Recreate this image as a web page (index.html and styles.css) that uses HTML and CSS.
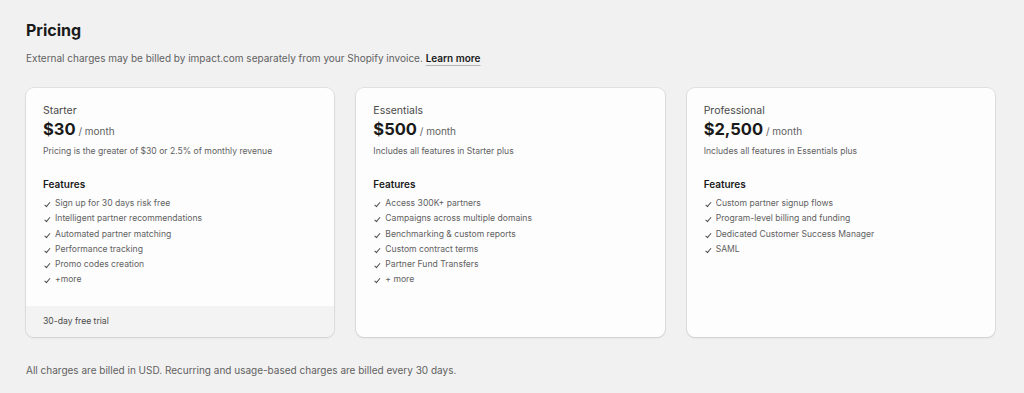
FILE: index.html
```html
<!DOCTYPE html>
<html lang="en">
<head>
    <meta charset="UTF-8">
    <meta name="viewport" content="width=device-width, initial-scale=1.0">
    <title>Pricing</title>
    <link rel="stylesheet" href="styles.css">
</head>
<body>
    <main class="pr-main">
        <h1 class="pr-title">Pricing</h1>
        <p class="pr-note">External charges may be billed by impact.com separately from your Shopify invoice. <a href="#" class="pr-link">Learn more</a></p>

        <div class="pr-plans">
            <div class="pr-card">
                <div class="pr-card-body">
                    <div class="pr-plan-name">Starter</div>
                    <div class="pr-price"><span class="pr-amount">$30</span> / month</div>
                    <div class="pr-desc">Pricing is the greater of $30 or 2.5% of monthly revenue</div>
                    <h3 class="pr-features-title">Features</h3>
                    <ul class="pr-features">
                        <li>Sign up for 30 days risk free</li>
                        <li>Intelligent partner recommendations</li>
                        <li>Automated partner matching</li>
                        <li>Performance tracking</li>
                        <li>Promo codes creation</li>
                        <li>+more</li>
                    </ul>
                </div>
                <div class="pr-card-footer">30-day free trial</div>
            </div>

            <div class="pr-card">
                <div class="pr-card-body">
                    <div class="pr-plan-name">Essentials</div>
                    <div class="pr-price"><span class="pr-amount">$500</span> / month</div>
                    <div class="pr-desc">Includes all features in Starter plus</div>
                    <h3 class="pr-features-title">Features</h3>
                    <ul class="pr-features">
                        <li>Access 300K+ partners</li>
                        <li>Campaigns across multiple domains</li>
                        <li>Benchmarking &amp; custom reports</li>
                        <li>Custom contract terms</li>
                        <li>Partner Fund Transfers</li>
                        <li>+ more</li>
                    </ul>
                </div>
            </div>

            <div class="pr-card">
                <div class="pr-card-body">
                    <div class="pr-plan-name">Professional</div>
                    <div class="pr-price"><span class="pr-amount">$2,500</span> / month</div>
                    <div class="pr-desc">Includes all features in Essentials plus</div>
                    <h3 class="pr-features-title">Features</h3>
                    <ul class="pr-features">
                        <li>Custom partner signup flows</li>
                        <li>Program-level billing and funding</li>
                        <li>Dedicated Customer Success Manager</li>
                        <li>SAML</li>
                    </ul>
                </div>
            </div>
        </div>

        <p class="pr-bottom">All charges are billed in USD. Recurring and usage-based charges are billed every 30 days.</p>
    </main>
</body>
</html>
```

FILE: styles.css
```css
body {
    font-family: 'Inter', 'Liberation Sans', Arial, sans-serif;
    background: #f1f1f1;
    color: #303030;
    margin: 0;
    padding: 0;
}
.pr-main {
    padding: 19px 29px 0 26px;
}
.pr-title {
    font-size: 16px;
    font-weight: 700;
    color: #1a1a1a;
    margin: 0;
    line-height: 22px;
}
.pr-note {
    font-size: 10px;
    color: #616161;
    margin: 9px 0 0;
    line-height: 16px;
}
.pr-link {
    color: #1a1a1a;
    font-weight: 600;
    text-decoration: underline;
    text-decoration-color: #b5b5b5;
    text-underline-offset: 3px;
}
.pr-plans {
    display: grid;
    grid-template-columns: repeat(3, 1fr);
    gap: 22px;
    margin-top: 22px;
    align-items: start;
}
.pr-card {
    background: #fdfdfd;
    border-radius: 8px;
    box-shadow: 0 1px 0 #d4d4d4, 0 0 0 1px rgba(0, 0, 0, 0.06), 0 1px 3px rgba(0, 0, 0, 0.08);
    overflow: hidden;
    height: 249px;
    display: flex;
    flex-direction: column;
}
.pr-card-body {
    padding: 15px 17px 0;
    flex: 1;
}
.pr-plan-name {
    font-size: 10.5px;
    color: #4a4a4a;
    line-height: 16px;
}
.pr-price {
    font-size: 10px;
    color: #616161;
    line-height: 20px;
}
.pr-amount {
    font-size: 16.5px;
    font-weight: 700;
    color: #1a1a1a;
}
.pr-desc {
    font-size: 8.6px;
    color: #616161;
    line-height: 14px;
    margin-top: 3px;
}
.pr-features-title {
    font-size: 10px;
    font-weight: 600;
    color: #1a1a1a;
    margin: 18px 0 0;
    line-height: 16px;
}
.pr-features {
    list-style: none;
    padding: 0;
    margin: 4px 0 0;
}
.pr-features li {
    font-size: 8.6px;
    color: #616161;
    line-height: 15.3px;
    padding-left: 12px;
    position: relative;
}
.pr-features li::before {
    content: "";
    position: absolute;
    left: 3px;
    top: 5px;
    width: 2px;
    height: 4.5px;
    border: solid #4a4a4a;
    border-width: 0 1.1px 1.1px 0;
    transform: rotate(40deg);
}
.pr-card-footer {
    background: #f3f3f3;
    font-size: 8.6px;
    color: #4a4a4a;
    padding: 8px 17px 9px;
    line-height: 14px;
}
.pr-bottom {
    font-size: 10px;
    color: #616161;
    margin: 25px 0 0;
    line-height: 16px;
}
```
